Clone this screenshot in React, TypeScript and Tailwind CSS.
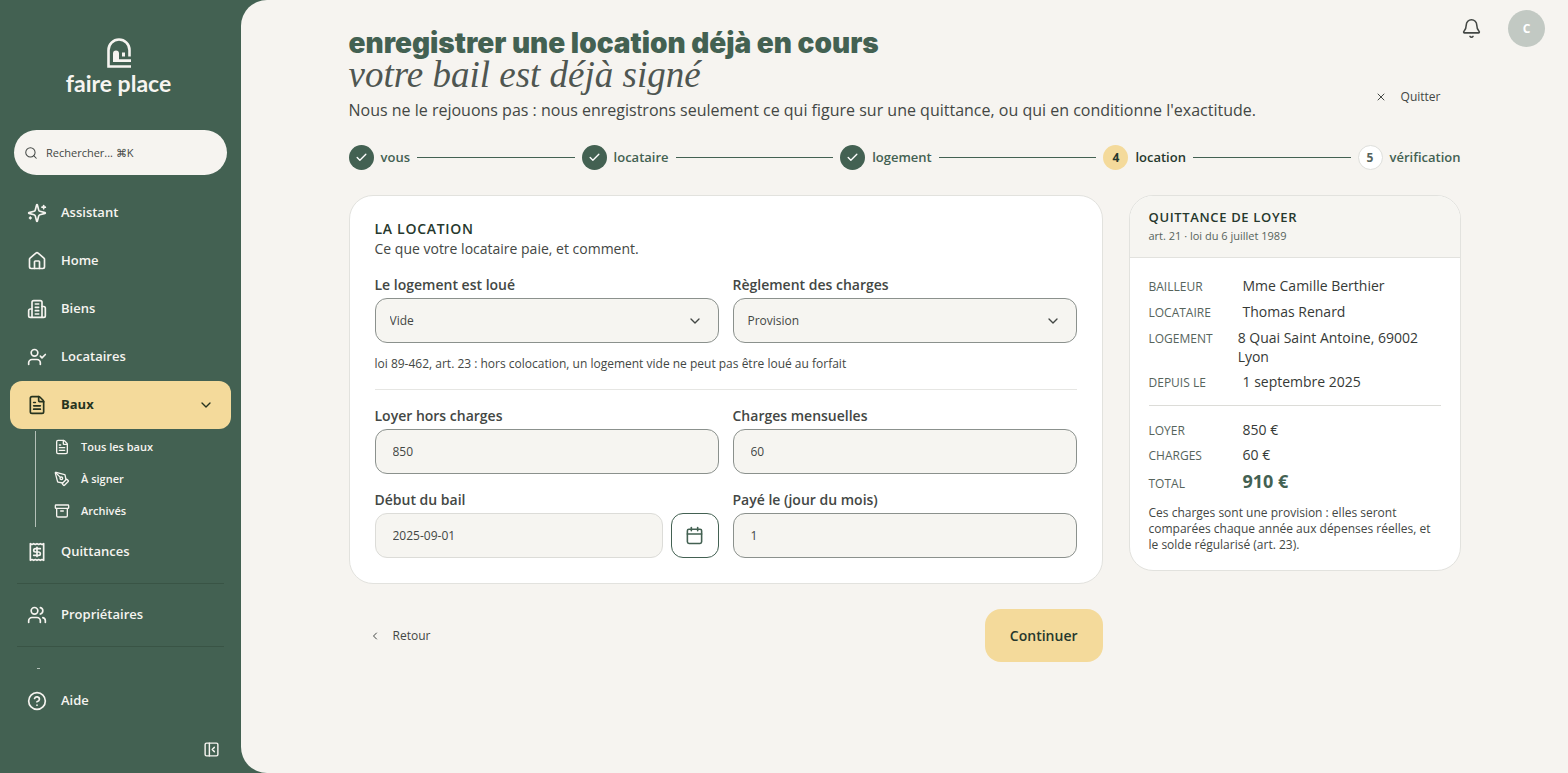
import React from "react";
import type { ReactNode } from "react";
import {
  Archive,
  Bell,
  Calendar,
  Check,
  ChevronDown,
  ChevronLeft,
  CircleHelp,
  FileText,
  House,
  PanelLeftClose,
  PenTool,
  Receipt,
  Search,
  UserCheck,
  Users,
  X,
} from "lucide-react";

function LineIcon({ paths }: { paths: string[] }) {
  return (
    <svg
      width="20"
      height="20"
      viewBox="0 0 24 24"
      fill="none"
      stroke="currentColor"
      strokeWidth="2"
      strokeLinecap="round"
      strokeLinejoin="round"
      aria-hidden="true"
    >
      {paths.map((d) => (
        <path key={d} d={d} />
      ))}
    </svg>
  );
}

const sparklePaths = [
  "M9.937 15.5A2 2 0 0 0 8.5 14.063l-6.135-1.582a.5.5 0 0 1 0-.962L8.5 9.936A2 2 0 0 0 9.937 8.5l1.582-6.135a.5.5 0 0 1 .963 0L14.063 8.5A2 2 0 0 0 15.5 9.937l6.135 1.581a.5.5 0 0 1 0 .964L15.5 14.063a2 2 0 0 0-1.437 1.437l-1.582 6.135a.5.5 0 0 1-.963 0z",
  "M20 3v4",
  "M22 5h-4",
  "M4 17v2",
  "M5 18H3",
];

const buildingPaths = [
  "M6 22V4a2 2 0 0 1 2-2h8a2 2 0 0 1 2 2v18Z",
  "M6 12H4a2 2 0 0 0-2 2v6a2 2 0 0 0 2 2h2",
  "M18 9h2a2 2 0 0 1 2 2v9a2 2 0 0 1-2 2h-2",
  "M10 6h4",
  "M10 10h4",
  "M10 14h4",
  "M10 18h4",
];

function Logo() {
  return (
    <a href="#" className="mr-1 flex flex-col items-center text-[#f6f4f0]">
      <svg width="24" height="30" viewBox="0 0 24 30" fill="none" aria-hidden="true">
        <path
          d="M22.5 18.5V12A10.5 10.5 0 0 0 1.5 12V28.5H24"
          stroke="currentColor"
          strokeWidth="2.6"
        />
        <path d="M6 24V15.5a3 3 0 0 1 6 0V21.2h12V24Z" fill="currentColor" />
        <path d="M15 14.5h3v4h-3Z" fill="currentColor" />
      </svg>
      <span className="font-['Lato',sans-serif] text-[23px] leading-[30px] font-bold">faire place</span>
    </a>
  );
}

function NavItem({ icon, label }: { icon: ReactNode; label: string }) {
  return (
    <a href="#" className="flex h-12 items-center gap-[14px] rounded-xl px-[17px] text-[13px] font-semibold">
      {icon}
      {label}
    </a>
  );
}

function SubItem({ icon, label }: { icon: ReactNode; label: string }) {
  return (
    <a href="#" className="flex h-8 items-center gap-[11px] text-[11px] font-semibold">
      {icon}
      {label}
    </a>
  );
}

function Sidebar() {
  return (
    <aside className="flex w-[241px] shrink-0 flex-col pt-[38px] pb-[15px] text-[#f6f4f0]">
      <Logo />
      <div className="mx-[14px] mt-8 flex h-[45px] items-center gap-2 rounded-full bg-[#f6f4f0] px-[10px] text-[#434744]">
        <Search size={14} strokeWidth={1.75} />
        <input
          type="text"
          aria-label="Rechercher"
          placeholder="Rechercher... ⌘K"
          className="h-full min-w-0 flex-1 bg-transparent text-[11px] outline-none placeholder:text-[#434744] placeholder:opacity-100"
        />
      </div>
      <nav className="mt-[14px] flex flex-col px-[10px]">
        <NavItem icon={<LineIcon paths={sparklePaths} />} label="Assistant" />
        <NavItem icon={<House size={20} />} label="Home" />
        <NavItem icon={<LineIcon paths={buildingPaths} />} label="Biens" />
        <NavItem icon={<UserCheck size={20} />} label="Locataires" />
        <button
          type="button"
          className="flex h-12 items-center gap-[14px] rounded-xl bg-[#f4da9b] px-[17px] text-left text-[13px] font-bold text-[#26331f]"
        >
          <FileText size={20} />
          <span className="flex-1">Baux</span>
          <ChevronDown size={16} />
        </button>
        <div className="mt-[2px] mb-[1px] ml-[25px] border-l border-[#b4c0b8] pl-[18px]">
          <SubItem icon={<FileText size={16} />} label="Tous les baux" />
          <SubItem icon={<PenTool size={16} />} label="À signer" />
          <SubItem icon={<Archive size={16} />} label="Archivés" />
        </div>
        <NavItem icon={<Receipt size={20} />} label="Quittances" />
        <hr className="mx-[7px] my-[7px] border-[#395445]" />
        <NavItem icon={<Users size={20} />} label="Propriétaires" />
        <hr className="mx-[7px] my-[7px] border-[#395445]" />
        <span className="mt-[14px] ml-[27px] h-px w-[3px] bg-[#b4c0b8]" aria-hidden="true" />
      </nav>
      <div className="mt-auto flex flex-col px-[10px]">
        <NavItem icon={<CircleHelp size={20} />} label="Aide" />
        <button type="button" aria-label="Réduire le menu" className="mt-4 mr-[11px] self-end">
          <PanelLeftClose size={17} />
        </button>
      </div>
    </aside>
  );
}

const steps = ["vous", "locataire", "logement", "location", "vérification"];
const currentStep = 3;

function Stepper() {
  return (
    <ol className="mt-[23px] flex items-center gap-[7px] text-[13px] font-semibold">
      {steps.map((name, i) => (
        <React.Fragment key={name}>
          {i > 0 && <li aria-hidden="true" className="h-px flex-1 bg-[#436152]" />}
          <li className="flex items-center gap-[7px]">
            {i < currentStep && (
              <span className="flex size-[25px] items-center justify-center rounded-full bg-[#436152] text-white">
                <Check size={13} strokeWidth={2.5} />
              </span>
            )}
            {i === currentStep && (
              <span className="flex size-[25px] items-center justify-center rounded-full bg-[#f4da9b] text-xs font-bold text-[#26382d]">
                {i + 1}
              </span>
            )}
            {i > currentStep && (
              <span className="flex size-[25px] items-center justify-center rounded-full border border-[#dedfdb] bg-white text-xs font-bold text-[#56645c]">
                {i + 1}
              </span>
            )}
            <span className={i === currentStep ? "text-[#26382d]" : "text-[#436152]"}>{name}</span>
          </li>
        </React.Fragment>
      ))}
    </ol>
  );
}

const labelClass = "text-sm leading-5 font-semibold text-[#434744]";

function SelectField({ id, label, options }: { id: string; label: string; options: string[] }) {
  return (
    <div className="flex flex-col gap-[3px]">
      <label htmlFor={id} className={labelClass}>
        {label}
      </label>
      <div className="relative">
        <select
          id={id}
          className="h-[45px] w-full appearance-none rounded-xl border border-[#8b918d] bg-[#f6f5f1] px-[14px] text-xs"
        >
          {options.map((o) => (
            <option key={o}>{o}</option>
          ))}
        </select>
        <ChevronDown size={16} className="pointer-events-none absolute top-1/2 right-4 -translate-y-1/2" />
      </div>
    </div>
  );
}

function TextField({ id, label, value }: { id: string; label: string; value: string }) {
  return (
    <div className="flex flex-col gap-[3px]">
      <label htmlFor={id} className={labelClass}>
        {label}
      </label>
      <input
        id={id}
        type="text"
        inputMode="numeric"
        defaultValue={value}
        className="h-[45px] w-full rounded-xl border border-[#8b918d] bg-[#f6f5f1] px-[17px] text-xs"
      />
    </div>
  );
}

function LeaseForm() {
  return (
    <form>
      <section className="rounded-3xl border border-[#e2e2de] bg-white px-[25px] pt-6 pb-[25px]">
        <h2 className="text-sm leading-[18px] font-semibold tracking-wider text-[#26382d] uppercase">
          La location
        </h2>
        <p className="text-sm leading-[22px]">Ce que votre locataire paie, et comment.</p>
        <div className="mt-[15px] grid grid-cols-2 gap-x-[14px]">
          <SelectField id="type" label="Le logement est loué" options={["Vide", "Meublé"]} />
          <SelectField id="charges-mode" label="Règlement des charges" options={["Provision", "Forfait"]} />
        </div>
        <p className="mt-3 text-xs leading-[18px]">
          loi 89-462, art. 23 : hors colocation, un logement vide ne peut pas être loué au forfait
        </p>
        <hr className="mt-4 border-[#e6e6e3]" />
        <div className="mt-4 grid grid-cols-2 gap-x-[14px] gap-y-4">
          <TextField id="loyer" label="Loyer hors charges" value="850" />
          <TextField id="charges" label="Charges mensuelles" value="60" />
          <div className="flex flex-col gap-[3px]">
            <label htmlFor="debut" className={labelClass}>
              Début du bail
            </label>
            <div className="flex gap-2">
              <input
                id="debut"
                type="text"
                readOnly
                value="2025-09-01"
                className="h-[45px] min-w-0 flex-1 rounded-xl border border-[#dcdcd8] bg-[#f6f5f1] px-[17px] text-xs"
              />
              <button
                type="button"
                aria-label="Choisir une date"
                className="flex w-12 items-center justify-center rounded-xl border border-[#436152] text-[#436152]"
              >
                <Calendar size={19} strokeWidth={2} />
              </button>
            </div>
          </div>
          <TextField id="jour" label="Payé le (jour du mois)" value="1" />
        </div>
      </section>
      <div className="mt-[25px] flex items-center justify-between">
        <button type="button" className="flex h-[53px] items-center gap-3 px-5 text-xs">
          <ChevronLeft size={12} />
          Retour
        </button>
        <button
          type="submit"
          className="h-[53px] rounded-2xl bg-[#f4da9b] px-[25px] text-sm font-semibold text-[#26382d]"
        >
          Continuer
        </button>
      </div>
    </form>
  );
}

function Row({ term, children }: { term: string; children: ReactNode }) {
  return (
    <div className="flex items-baseline gap-[10px]">
      <dt className="w-[84px] text-xs leading-[19px] text-[#56645c] uppercase">{term}</dt>
      <dd className="text-sm leading-[19px] text-[#363a37]">{children}</dd>
    </div>
  );
}

function RentReceipt() {
  return (
    <aside className="self-start overflow-hidden rounded-3xl border border-[#e2e2de] bg-white">
      <header className="border-b border-[#e2e2de] bg-[#f6f5f1] px-[19px] pt-[11px] pb-3">
        <h2 className="text-[13px] leading-5 font-semibold tracking-wider text-[#26382d] uppercase">
          Quittance de loyer
        </h2>
        <p className="text-[11px] leading-[18px] text-[#56645c]">art. 21 · loi du 6 juillet 1989</p>
      </header>
      <div className="px-[19px] pt-[18px] pb-[17px]">
        <dl className="flex flex-col gap-[6px]">
          <Row term="Bailleur">Mme Camille Berthier</Row>
          <Row term="Locataire">Thomas Renard</Row>
          <Row term="Logement">8 Quai Saint Antoine, 69002 Lyon</Row>
          <Row term="Depuis le">1 septembre 2025</Row>
        </dl>
        <hr className="mt-[13px] mb-[14px] border-[#dcdcd8]" />
        <dl className="flex flex-col gap-[5px]">
          <Row term="Loyer">850 €</Row>
          <Row term="Charges">60 €</Row>
          <Row term="Total">
            <strong className="text-lg leading-[22px] font-bold text-[#436152]">910 €</strong>
          </Row>
        </dl>
        <p className="mt-3 text-xs leading-4">
          Ces charges sont une provision : elles seront comparées chaque année aux dépenses réelles, et le
          solde régularisé (art. 23).
        </p>
      </div>
    </aside>
  );
}

export default function App() {
  return (
    <div className="flex min-h-screen bg-[#436152] font-['Open_Sans','Noto_Sans',sans-serif] text-[#434744]">
      <Sidebar />
      <main className="relative min-w-0 flex-1 rounded-l-[26px] bg-[#f6f4f0] px-6 pt-[27px] pb-10">
        <div className="absolute top-[10px] right-[23px] flex items-center gap-[26px]">
          <button type="button" aria-label="Notifications">
            <Bell size={21} strokeWidth={1.75} />
          </button>
          <button
            type="button"
            className="flex size-[37px] items-center justify-center rounded-full bg-[#c2c9c3] text-xs font-bold text-white"
          >
            C
          </button>
        </div>
        <div className="mx-auto max-w-[1112px]">
          <header className="flex items-end justify-between">
            <div>
              <h1 className="text-[#436152]">
                <span className="block font-['Inter',sans-serif] text-[28px] leading-8 font-black">
                  enregistrer une location déjà en cours
                </span>
                <span className="block font-['Liberation_Serif',serif] text-[37px] leading-8 text-[#4f5651] italic">
                  votre bail est déjà signé
                </span>
              </h1>
              <p className="mt-[7px] text-base leading-6">
                Nous ne le rejouons pas : nous enregistrons seulement ce qui figure sur une quittance, ou qui en
                conditionne l'exactitude.
              </p>
            </div>
            <button type="button" className="flex h-[50px] items-center gap-[14px] px-5 text-xs">
              <X size={12} />
              Quitter
            </button>
          </header>
          <Stepper />
          <div className="mt-[25px] grid grid-cols-[minmax(0,1fr)_332px] gap-[26px]">
            <LeaseForm />
            <RentReceipt />
          </div>
        </div>
      </main>
    </div>
  );
}
